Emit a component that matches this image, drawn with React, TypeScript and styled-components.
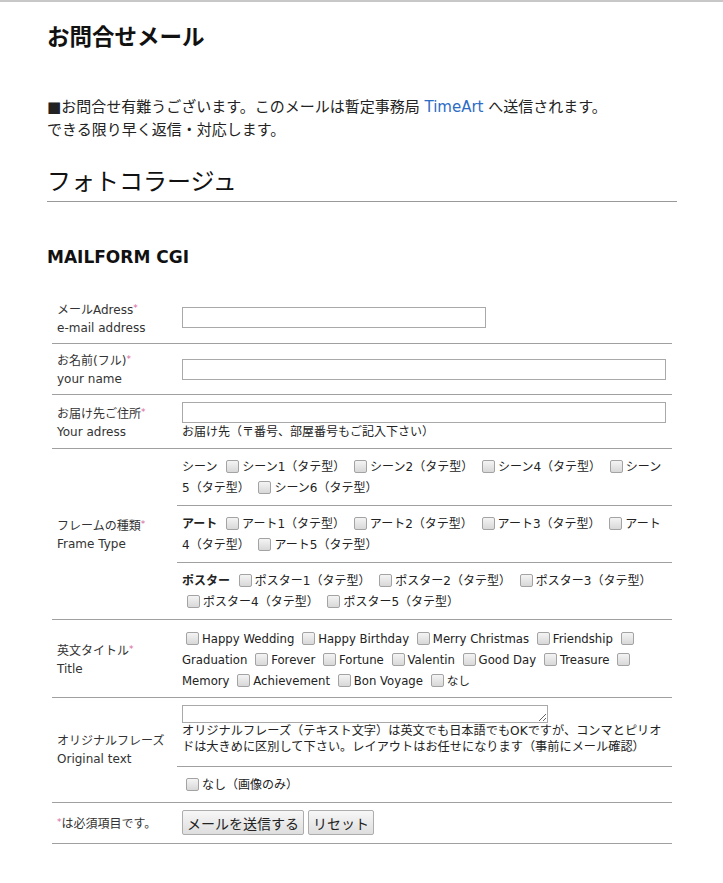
import React from 'react';
import styled, { createGlobalStyle } from 'styled-components';

const GlobalStyle = createGlobalStyle`
    body {
        margin: 0;
        background: #fff;
        color: #222;
        font-family: "DejaVu Sans", "Noto Sans CJK JP", sans-serif;
    }
`;

const Page = styled.div`
    border-top: 2px solid #c8c8c8;
    padding: 18px 0 40px 47px;
`;

const Main = styled.div`
    width: 630px;
`;

const PageTitle = styled.h1`
    margin: 0;
    font-size: 22.5px;
    line-height: 34px;
    font-weight: bold;
    color: #111;
`;

const Intro = styled.p`
    margin: 42px 0 0;
    font-size: 15px;
    line-height: 23px;
    color: #222;
`;

const Link = styled.a`
    color: #2b6cc4;
    text-decoration: none;
`;

const SectionTitle = styled.h2`
    margin: 22px 0 0;
    padding-bottom: 1px;
    font-size: 24px;
    line-height: 36px;
    font-weight: normal;
    color: #111;
    border-bottom: 1px solid #999;
`;

const SubTitle = styled.h3`
    margin: 43px 0 0;
    font-size: 17px;
    line-height: 24px;
    font-weight: bold;
    color: #111;
`;

const Form = styled.div`
    margin: 23px 5px 0;
`;

const Row = styled.div`
    display: grid;
    grid-template-columns: 125px 1fr;
    border-bottom: 1px solid #a0a0a0;
`;

const Label = styled.div`
    display: flex;
    flex-direction: column;
    justify-content: center;
    padding: 0 5px;
    font-size: 12px;
    line-height: 18px;
    color: #333;
`;

const Req = styled.span`
    color: #d9669a;
    font-size: 9px;
    vertical-align: 3px;
`;

interface CellProps {
    $pad: string;
}

const Cell = styled.div<CellProps>`
    padding: ${props => props.$pad};
    min-width: 0;
`;

const Stack = styled.div`
    display: flex;
    flex-direction: column;
`;

const SubRow = styled.div<CellProps>`
    padding: ${props => props.$pad};
    & + & {
        border-top: 1px solid #a0a0a0;
    }
`;

interface FieldProps {
    $width?: string;
}

const TextField = styled.input<FieldProps>`
    display: block;
    box-sizing: border-box;
    width: ${props => props.$width || '100%'};
    height: 21px;
    margin: 0;
    border: 1px solid #a9a9a9;
    border-radius: 0;
    padding: 1px 3px;
    font-size: 12px;
    background: #fff;
`;

const TextBox = styled.textarea`
    display: block;
    box-sizing: border-box;
    width: 366px;
    height: 18px;
    margin: 0;
    padding: 0 2px;
    border: 1px solid #a9a9a9;
    border-radius: 0;
    font-size: 12px;
    resize: both;
    overflow: hidden;
`;

const Note = styled.div`
    font-size: 12.2px;
    line-height: 16px;
    color: #222;
`;

const FieldNote = styled(Note)`
    font-size: 12px;
    line-height: 18px;
`;

const Box = styled.input`
    appearance: none;
    -webkit-appearance: none;
    display: inline-block;
    box-sizing: border-box;
    width: 13px;
    height: 13px;
    margin: 0 3px 0 4px;
    vertical-align: -2px;
    border: 1px solid #a3a3a3;
    border-radius: 2px;
    background: linear-gradient(#f4f4f4, #d8d8d8);
`;

interface OptionsProps {
    $size: string;
    $gap: number;
}

const Options = styled.div<OptionsProps>`
    font-size: ${props => props.$size};
    line-height: 21px;
    color: #222;

    ${Box} {
        margin-left: ${props => props.$gap}px;
    }
`;

interface GroupNameProps {
    $bold: boolean;
}

const GroupName = styled.span<GroupNameProps>`
    font-weight: ${props => props.$bold ? 'bold' : 'normal'};
`;

const Buttons = styled.div`
    display: flex;
    gap: 4px;
`;

const Button = styled.button`
    box-sizing: border-box;
    height: 25px;
    padding: 0 4px;
    border: 1px solid #adadad;
    border-radius: 2px;
    background: linear-gradient(#f7f7f7, #dedede);
    font-family: "DejaVu Sans", "Noto Sans CJK JP", sans-serif;
    font-size: 14px;
    color: #222;
`;

const frameGroups = [
    { name: 'シーン', bold: false, items: ['シーン1（タテ型）', 'シーン2（タテ型）', 'シーン4（タテ型）', 'シーン5（タテ型）', 'シーン6（タテ型）'] },
    { name: 'アート', bold: true, items: ['アート1（タテ型）', 'アート2（タテ型）', 'アート3（タテ型）', 'アート4（タテ型）', 'アート5（タテ型）'] },
    { name: 'ポスター', bold: true, items: ['ポスター1（タテ型）', 'ポスター2（タテ型）', 'ポスター3（タテ型）', 'ポスター4（タテ型）', 'ポスター5（タテ型）'] },
];

const titles = [
    'Happy Wedding', 'Happy Birthday', 'Merry Christmas', 'Friendship', 'Graduation',
    'Forever', 'Fortune', 'Valentin', 'Good Day', 'Treasure', 'Memory',
    'Achievement', 'Bon Voyage', 'なし',
];

const CheckList: React.FC<{ items: string[] }> = ({ items }) => (
    <>
        {items.map(item => (
            <React.Fragment key={item}>
                {' '}<Box type="checkbox" />{item}
            </React.Fragment>
        ))}
    </>
);

const App: React.FC = () => {
    return (
        <Page>
            <GlobalStyle />
            <Main>
                <PageTitle>お問合せメール</PageTitle>
                <Intro>
                    ■お問合せ有難うございます。このメールは暫定事務局 <Link href="#">TimeArt</Link> へ送信されます。<br />
                    できる限り早く返信・対応します。
                </Intro>
                <SectionTitle>フォトコラージュ</SectionTitle>
                <SubTitle>MAILFORM CGI</SubTitle>

                <Form>
                    <Row>
                        <Label>
                            <div>メールAdress<Req>*</Req></div>
                            <div>e-mail address</div>
                        </Label>
                        <Cell $pad="15px 6px 15px 5px">
                            <TextField type="text" $width="304px" />
                        </Cell>
                    </Row>
                    <Row>
                        <Label>
                            <div>お名前(フル)<Req>*</Req></div>
                            <div>your name</div>
                        </Label>
                        <Cell $pad="15px 6px 14px 5px">
                            <TextField type="text" />
                        </Cell>
                    </Row>
                    <Row>
                        <Label>
                            <div>お届け先ご住所<Req>*</Req></div>
                            <div>Your adress</div>
                        </Label>
                        <Cell $pad="7px 6px 7px 5px">
                            <TextField type="text" />
                            <FieldNote>お届け先（〒番号、部屋番号もご記入下さい）</FieldNote>
                        </Cell>
                    </Row>
                    <Row>
                        <Label>
                            <div>フレームの種類<Req>*</Req></div>
                            <div>Frame Type</div>
                        </Label>
                        <Stack>
                            {frameGroups.map(group => (
                                <SubRow key={group.name} $pad="8px 5px 6px">
                                    <Options $size="12px" $gap={5}>
                                        <GroupName $bold={group.bold}>{group.name}</GroupName>
                                        <CheckList items={group.items} />
                                    </Options>
                                </SubRow>
                            ))}
                        </Stack>
                    </Row>
                    <Row>
                        <Label>
                            <div>英文タイトル<Req>*</Req></div>
                            <div>Title</div>
                        </Label>
                        <Cell $pad="9px 5px 5px">
                            <Options $size="11.7px" $gap={4}>
                                <CheckList items={titles} />
                            </Options>
                        </Cell>
                    </Row>
                    <Row>
                        <Label>
                            <div>オリジナルフレーズ</div>
                            <div>Original text</div>
                        </Label>
                        <Stack>
                            <SubRow $pad="7px 5px 11px">
                                <TextBox />
                                <Note>オリジナルフレーズ（テキスト文字）は英文でも日本語でもOKですが、コンマとピリオドは大きめに区別して下さい。レイアウトはお任せになります（事前にメール確認）</Note>
                            </SubRow>
                            <SubRow $pad="8px 5px 6px">
                                <Options $size="12px" $gap={4}>
                                    <CheckList items={['なし（画像のみ）']} />
                                </Options>
                            </SubRow>
                        </Stack>
                    </Row>
                    <Row>
                        <Label>
                            <div><Req>*</Req>は必須項目です。</div>
                        </Label>
                        <Cell $pad="7px 5px 8px">
                            <Buttons>
                                <Button type="button">メールを送信する</Button>
                                <Button type="button">リセット</Button>
                            </Buttons>
                        </Cell>
                    </Row>
                </Form>
            </Main>
        </Page>
    );
};

export default App;
